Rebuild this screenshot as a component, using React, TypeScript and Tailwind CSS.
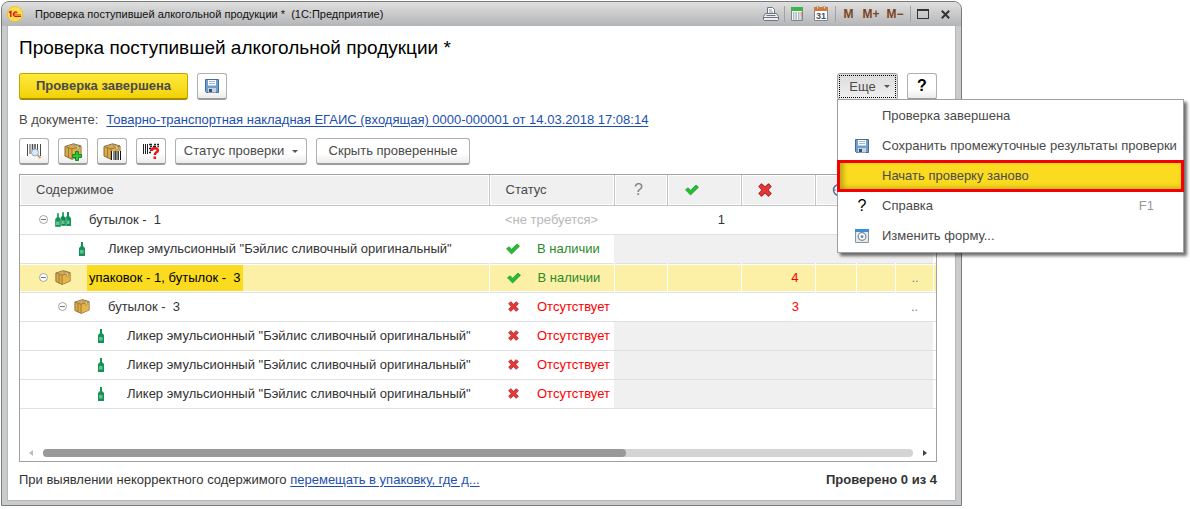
import type { ReactNode } from 'react'

function Logo() {
  return (
    <svg width="16" height="16" viewBox="0 0 16 16">
      <circle cx="8" cy="8" r="7.6" fill="#fde04a" stroke="#f0b92c" strokeWidth=".8" />
      <path d="M2 6.500 3.800 5.500V11" fill="none" stroke="#d8171c" strokeWidth="1.500" />
      <path d="M10.300 6.600A2.300 2.300 0 1 0 8 10.400h6" fill="none" stroke="#d8171c" strokeWidth="1.300" />
      <path d="M9.200 7.800a1 1 0 1 0-1 1H14" fill="none" stroke="#d8171c" strokeWidth=".7" />
    </svg>
  )
}

function Printer() {
  return (
    <svg width="16" height="16" viewBox="0 0 16 16">
      <path d="M4.500 8V1.500h5l2 2V8" fill="#fff" stroke="#6b7480" />
      <path d="M6 4h3M6 6h4" stroke="#8a929c" />
      <path d="M2.500 7.500h11l2 3v3a1 1 0 0 1-1 1h-13a1 1 0 0 1-1-1v-3z" fill="#eceff1" stroke="#6b7480" />
      <path d="M3.500 9.500h9M1 11.500h14" stroke="#6b7480" />
    </svg>
  )
}

function Calculator() {
  return (
    <svg width="14" height="16" viewBox="0 0 14 16">
      <path d="M1.500 1.500h11v13h-11z" fill="#f4f6f6" stroke="#7a8790" />
      <path d="M1 1h12v4H1z" fill="#3db54a" />
      <path d="M3 7h1.500M5.500 7H7M8 7h1.500M3 9h1.500M5.500 9H7M8 9h1.500M3 11h1.500M5.500 11H7M8 11h1.500M3 13h1.500M5.500 13H7M8 13h1.500M10.500 11H12M10.500 13H12" stroke="#75848c" />
      <path d="M10.500 7H12M10.500 9H12" stroke="#d23b32" />
    </svg>
  )
}

function Calendar() {
  return (
    <svg width="14" height="16" viewBox="0 0 14 16">
      <path d="M.5 2.500h13v12H.5z" fill="#fff" stroke="#7a8790" />
      <path d="M0 1h14v4H0z" fill="#d07a3e" />
      <path d="M3 0h1.500v3H3zM9.500 0H11v3H9.500z" fill="#fff" stroke="#8d5a36" strokeWidth=".5" />
      <text x="7" y="13" textAnchor="middle" fontSize="9" fontFamily="Liberation Sans, sans-serif" fill="#46525c">31</text>
    </svg>
  )
}

function Floppy() {
  return (
    <svg width="14" height="14" viewBox="0 0 14 14">
      <path d="M.5.5h13v13h-12l-1-1z" fill="#6d9fd3" stroke="#456c99" />
      <path d="M3 1h8v5.500H3z" fill="#fff" />
      <path d="M4 2.500h6M4 4.500h6" stroke="#a5b6c8" />
      <path d="M3 9h8v4.500H3z" fill="#c9d3dc" />
      <path d="M4 10h3v3H4z" fill="#34536f" />
    </svg>
  )
}

function Box() {
  return (
    <svg width="18" height="17" viewBox="0 0 18 17">
      <path d="M1 3.500 9.500.8 17 3v9.500L8 16.300 1 13z" fill="#dcaa42" stroke="#83683a" />
      <path d="M1.500 3.700 9.500 1.300 16.500 3.300 8 6z" fill="#cfa95c" />
      <path d="M8 6v10l8.500-3.700v-9z" fill="#e5b548" />
      <path d="M1 3.500 8 6l9-2.900M8 6v10M4.500 5v9.500" fill="none" stroke="#94723a" strokeWidth=".9" />
      <path d="m9.500 1.500 3.500 3v2.700l2-.8V3.700L11.500 2z" fill="#f0dfb4" stroke="#8d7444" strokeWidth=".6" />
    </svg>
  )
}

function BoxAdd() {
  return (
    <span className="relative">
      <Box />
      <svg className="absolute left-2 top-2" width="10" height="10" viewBox="0 0 10 10">
        <path d="M3.500.5h3v3h3v3h-3v3h-3v-3h-3v-3h3z" fill="#2dc43a" stroke="#168a22" />
      </svg>
    </span>
  )
}

function BoxBarcode() {
  return (
    <span className="relative">
      <Box />
      <svg className="absolute left-2 top-2" width="10" height="9" viewBox="0 0 10 9">
        <path d="M0 0h10v9H0z" fill="#fff" />
        <path d="M.5 0v9M3 0v9M6 0v9M9.500 0v9" stroke="#111" />
        <path d="M4.500 0v9M7.500 0v9" stroke="#111" strokeWidth=".8" />
      </svg>
    </span>
  )
}

function BarcodeSearch() {
  return (
    <svg width="16" height="16" viewBox="0 0 16 16">
      <path d="M1.500 1v12M4 1v10M11.500 1v10M14.500 1v12" stroke="#4a4a4a" />
      <path d="M6.500 1v10M9 1v10" stroke="#4a4a4a" strokeWidth="1.500" />
      <circle cx="9" cy="9.500" r="3.500" fill="#d8e8f7" stroke="#8fabcb" />
      <path d="m11.500 12 3 3" stroke="#d59c5c" strokeWidth="1.800" />
    </svg>
  )
}

function BarcodeUnknown() {
  return (
    <svg width="18" height="17" viewBox="0 0 18 17">
      <path d="M1.500 1v10M3.500 1v10M5.500 1v10" stroke="#222" />
      <path d="M7 1.500h3M12 1.500h2M15 1.500h2M8 3.500h2M11 3.500h3M7 5.500h2M10 5.500h1M8 7.500h1M7 9.500h2M15.500 3.500h1.500" stroke="#222" strokeWidth="1.300" />
      <path d="M9.500 8c.2-4 7-3.500 6.300-.3C15.400 9.500 12.800 9.300 12.800 12" fill="none" stroke="#f01414" strokeWidth="2.500" />
      <path d="M11.500 13.500H14V16h-2.500z" fill="#f01414" />
    </svg>
  )
}

const bottlePath = 'M2 0h2v4l2 2v8H0V6l2-2z'

function Bottle() {
  return (
    <svg width="16" height="14" viewBox="0 0 16 14">
      <g transform="translate(5)">
        <path d={bottlePath} fill="#149356" />
        <path d="M1 8h3.500v3.500H1z" fill="#66c08f" />
      </g>
    </svg>
  )
}

function Bottles() {
  return (
    <svg width="16" height="15" viewBox="0 0 16 15">
      <g transform="translate(10)"><path d={bottlePath} fill="#149356" /></g>
      <g transform="translate(5)"><path d={bottlePath} fill="#0e8a4e" stroke="#fff" strokeWidth=".4" /></g>
      <g transform="translate(0 1)"><path d={bottlePath} fill="#149356" stroke="#fff" strokeWidth=".4" /></g>
      <path d="M1 9.500h3.500V13H1zM6.500 8.500h3V12h-3zM12 8.500h2.500V12H12z" fill="#66c08f" />
    </svg>
  )
}

function Check() {
  return (
    <svg width="16" height="14" viewBox="0 0 16 14">
      <path d="M1.500 6.800 4 4.800l2.600 2.400L12 2l2.500 2.200L6.600 12z" fill="#25bd2f" stroke="#2a9a35" strokeWidth=".8" strokeLinejoin="round" />
    </svg>
  )
}

function Cross({ size }: { size: number }) {
  return (
    <svg width={size} height={size} viewBox="0 0 12 12">
      <path d="M3 .7 6 3.600 9 .7 11.300 3 8.500 6l2.800 3L9 11.300 6 8.400 3 11.300.7 9l2.800-3L.7 3z" fill="#ec3535" stroke="#a82a2a" strokeWidth=".9" strokeLinejoin="round" />
    </svg>
  )
}

function Pending() {
  return (
    <svg width="14" height="14" viewBox="0 0 14 14">
      <circle cx="7" cy="7" r="5.500" fill="#fff" stroke="#56718f" strokeWidth="1.500" />
      <path d="M2 7h2M7 4v3h3" fill="none" stroke="#56718f" />
    </svg>
  )
}

function FormGear() {
  return (
    <svg width="14" height="14" viewBox="0 0 14 14">
      <path d="M.5.5h13v13H.5z" fill="#e4e9ed" stroke="#8796a3" />
      <path d="M0 0h14v3H0z" fill="#3f8fd8" />
      <circle cx="7" cy="7.500" r="3.800" fill="#fff" stroke="#7d8b97" strokeWidth="1.200" />
      <circle cx="7" cy="7.500" r="1.500" fill="#7d8b97" />
    </svg>
  )
}

function Caret() {
  return (
    <svg width="6" height="3" viewBox="0 0 6 3">
      <path d="M0 0h6L3 3z" fill="#555" />
    </svg>
  )
}

function Toggle() {
  return (
    <button className="block" aria-label="Свернуть">
      <svg width="9" height="9" viewBox="0 0 9 9">
        <circle cx="4.500" cy="4.500" r="4" fill="#fff" stroke="#9a9a9a" strokeWidth=".9" />
        <path d="M2 4.500h5" stroke="#777" />
      </svg>
    </button>
  )
}

function Button({ className = '', label, children }: { className?: string; label?: string; children: ReactNode }) {
  return (
    <button
      aria-label={label}
      className={`flex h-[27px] items-center justify-center rounded-[3px] border border-b-2 border-[#b0b0b0] border-b-[#9c9c9c] bg-linear-to-b from-white from-60% to-[#ececec] ${className}`}
    >
      {children}
    </button>
  )
}

type Row = {
  level: number
  icon: 'bottles' | 'bottle' | 'box'
  name: string
  status: 'none' | 'ok' | 'missing'
  ok?: string
  bad?: string
  more?: boolean
  selected?: boolean
}

const drink = 'Ликер эмульсионный "Бэйлис сливочный оригинальный"'

const rows: Row[] = [
  { level: 0, icon: 'bottles', name: 'бутылок -  1', status: 'none', ok: '1' },
  { level: 1, icon: 'bottle', name: drink, status: 'ok' },
  { level: 0, icon: 'box', name: 'упаковок - 1, бутылок -  3', status: 'ok', bad: '4', more: true, selected: true },
  { level: 1, icon: 'box', name: 'бутылок -  3', status: 'missing', bad: '3', more: true },
  { level: 2, icon: 'bottle', name: drink, status: 'missing' },
  { level: 2, icon: 'bottle', name: drink, status: 'missing' },
  { level: 2, icon: 'bottle', name: drink, status: 'missing' },
]

const indents = ['pl-[19px]', 'pl-[38px]', 'pl-[57px]']

function Status({ status }: { status: Row['status'] }) {
  if (status === 'none') return <span className="text-[#b8b8b8]">&lt;не требуется&gt;</span>
  return (
    <div className="flex items-center gap-4">
      <span className="flex w-4 shrink-0 justify-center">{status === 'ok' ? <Check /> : <Cross size={11} />}</span>
      <span className={status === 'ok' ? 'text-[#2a8a2a]' : 'text-[#f00]'}>{status === 'ok' ? 'В наличии' : 'Отсутствует'}</span>
    </div>
  )
}

function TableRow({ row }: { row: Row }) {
  const leaf = row.icon === 'bottle'
  const bg = row.selected ? 'bg-[#fcf0a6] shadow-[inset_0_1px_white,inset_0_-1px_white]' : leaf ? 'bg-[#f0f0f0]' : ''
  const edge = row.selected ? 'border-l border-white' : ''
  const cell = `${bg} ${edge} p-0`
  return (
    <tr className="h-[29px] border-b border-[#e0e0e0]">
      <td className={`p-0 ${row.selected ? bg : ''}`}>
        <div className={`flex h-7 items-center ${indents[row.level]}`}>
          <span className="w-4 shrink-0">{!leaf && <Toggle />}</span>
          <span className="flex w-4 shrink-0 items-center justify-center">
            {row.icon === 'box' ? <Box /> : row.icon === 'bottles' ? <Bottles /> : <Bottle />}
          </span>
          <span className={`ml-4 px-0.5 whitespace-pre ${row.selected ? 'bg-[#fadb1f] leading-[26px] text-black' : ''}`}>{row.name}</span>
        </div>
      </td>
      <td className={`pl-4 whitespace-nowrap ${row.selected ? `${bg} ${edge}` : ''}`}>
        <Status status={row.status} />
      </td>
      <td className={cell}></td>
      <td className={`${bg} ${edge} pr-4 text-right`}>{row.ok}</td>
      <td className={`${bg} ${edge} pr-4 text-right text-[#f00]`}>{row.bad}</td>
      <td className={cell}></td>
      <td className={cell}></td>
      <td className={`${bg} ${edge} pl-4 text-[#5b86a8]`}>{row.more && '..'}</td>
      <td className={row.selected ? cell : 'p-0'}></td>
    </tr>
  )
}

function MenuItem({ icon, hint, active, children }: { icon?: ReactNode; hint?: string; active?: boolean; children: ReactNode }) {
  return (
    <li role="none">
      <button
        role="menuitem"
        className={`flex h-[30px] w-full items-center pl-[17px] text-left whitespace-nowrap ${
          active ? 'relative bg-[#fadb1f] shadow-[inset_6px_0_4px_#a08a1090,inset_0_-4px_4px_#a08a1070] outline-3 outline-[#f40000] -outline-offset-2' : ''
        }`}
      >
        <span className="flex w-[14px] justify-center text-[16px] text-black">{icon}</span>
        <span className="ml-[13px] grow">{children}</span>
        {hint && <span className="pr-[29px] text-[#999]">{hint}</span>}
      </button>
    </li>
  )
}

function MoreMenu() {
  return (
    <div className="relative">
      <button
        aria-expanded="true"
        className="h-[27px] w-[61px] rounded-[3px] border border-[#a0a0a0] bg-linear-to-b from-[#dcdcdc] to-[#f0f0f0] p-px"
      >
        <span className="flex h-full items-center justify-center gap-2 border border-dotted border-black pl-1">
          Еще <Caret />
        </span>
      </button>
      <ul
        role="menu"
        className="absolute top-[26px] left-0 z-10 w-[347px] border border-[#a0a0a0] bg-white py-px shadow-[3px_3px_3px_#00000090]"
      >
        <MenuItem>Проверка завершена</MenuItem>
        <MenuItem icon={<Floppy />}>Сохранить промежуточные результаты проверки</MenuItem>
        <MenuItem active>Начать проверку заново</MenuItem>
        <MenuItem icon="?" hint="F1">Справка</MenuItem>
        <MenuItem icon={<FormGear />}>Изменить форму...</MenuItem>
      </ul>
    </div>
  )
}

function TitleBar() {
  return (
    <header className="flex h-[24px] items-center bg-linear-to-b from-[#dfdfdf] to-[#b4b5b7] pr-[11px] pl-[5px] text-[11px] text-[#111]">
      <Logo />
      <span className="ml-3 grow whitespace-pre">Проверка поступившей алкогольной продукции *  (1С:Предприятие)</span>
      <div className="flex items-center text-[12px] font-bold text-[#7b4522]">
        <button aria-label="Печать"><Printer /></button>
        <span className="mx-[5px] h-4 w-px bg-[#a2a2a2]" />
        <button aria-label="Калькулятор"><Calculator /></button>
        <button aria-label="Календарь" className="ml-2.5"><Calendar /></button>
        <span className="mx-[7px] h-4 w-px bg-[#a2a2a2]" />
        <button className="w-[11px]">M</button>
        <button className="ml-2 w-[18px]">M+</button>
        <button className="ml-1.5 w-[18px]">M−</button>
        <span className="mx-1.5 h-4 w-px bg-[#a2a2a2]" />
        <button aria-label="Развернуть" className="h-[10px] w-[12px] border border-t-2 border-[#333]" />
        <button aria-label="Закрыть" className="ml-3">
          <svg width="9" height="9" viewBox="0 0 9 9"><path d="m.8.8 7.400 7.400M8.200.8.8 8.200" stroke="#333" strokeWidth="2" /></svg>
        </button>
      </div>
    </header>
  )
}

export default function App() {
  const th = 'border-r border-[#c4c4c4] pl-4 text-left font-normal shadow-[inset_0_0_0_1px_white]'

  return (
    <div className="bg-white pt-px pr-[228px] pl-px font-['Liberation_Sans',Arial,sans-serif] text-[13px] leading-4 text-[#333]">
      <div className="rounded-t-lg border border-[#77797b] bg-[#c9cbcd] pb-1">
        <div className="overflow-hidden rounded-t-[7px]">
          <TitleBar />
        </div>
        <main className="mx-[5px] border border-t-0 border-[#b5b7b9] bg-white pt-2.5 pr-[18px] pb-3 pl-[11px]">
          <h1 className="text-[19px] leading-6 text-black">Проверка поступившей алкогольной продукции *</h1>

          <div className="mt-[13px] flex gap-[9px] text-[#4a4a4a]">
            <button className="h-[27px] w-[169px] rounded-[3px] border border-b-2 border-[#c4a400] border-b-[#a68b00] bg-linear-to-b from-[#ffe938] to-[#f2d200] font-bold">
              Проверка завершена
            </button>
            <Button className="w-[30px]" label="Записать"><Floppy /></Button>
            <div className="grow" />
            <MoreMenu />
            <Button className="w-[30px] text-[16px] font-bold text-black">?</Button>
          </div>

          <p className="mt-3 flex gap-2 text-[#4a4a4a]">
            <span>В документе:</span>
            <a href="#" className="text-[#1c50b0] underline underline-offset-2">
              Товарно-транспортная накладная ЕГАИС (входящая) 0000-000001 от 14.03.2018 17:08:14
            </a>
          </p>

          <div className="mt-2.5 flex gap-[9px] text-[#4a4a4a]">
            <Button className="w-[30px]" label="Поиск по штрихкоду"><BarcodeSearch /></Button>
            <Button className="w-[30px]" label="Добавить упаковку"><BoxAdd /></Button>
            <Button className="w-[30px]" label="Штрихкод упаковки"><BoxBarcode /></Button>
            <Button className="w-[30px]" label="Нет штрихкода"><BarcodeUnknown /></Button>
            <Button className="w-[132px] gap-2 whitespace-nowrap">Статус проверки <Caret /></Button>
            <Button className="w-[154px] whitespace-nowrap">Скрыть проверенные</Button>
          </div>

          <div className="mt-[9px] border border-[#a0a0a0]">
            <table className="w-full table-fixed border-collapse">
              <colgroup>
                <col />
                <col className="w-[125px]" />
                <col className="w-[53px]" />
                <col className="w-[74px]" />
                <col className="w-[74px]" />
                <col className="w-[41px]" />
                <col className="w-[39px]" />
                <col className="w-[38px]" />
                <col className="w-[3px]" />
              </colgroup>
              <thead>
                <tr className="h-[30px] border-b border-[#c4c4c4] bg-[#f0f0f0] text-[#4a4a4a]">
                  <th className={th}>Содержимое</th>
                  <th className={th}>Статус</th>
                  <th className={th}><span className="block w-4 text-center text-[16px] text-[#808080]">?</span></th>
                  <th className={th}><Check /></th>
                  <th className={th}><Cross size={14} /></th>
                  <th className={th}><Pending /></th>
                  <th className={th}></th>
                  <th className={th}></th>
                  <th className="p-0"></th>
                </tr>
              </thead>
              <tbody>
                {rows.map((row, i) => (
                  <TableRow key={i} row={row} />
                ))}
              </tbody>
            </table>
            <div className="mt-9 flex h-[16px] items-center px-[9px]">
              <svg width="4" height="6" viewBox="0 0 4 6"><path d="M4 0v6L0 3z" fill="#bbb" /></svg>
              <div className="mx-2.5 h-2 grow rounded-full bg-[#d4d4d4]">
                <div className="h-2 w-[67%] rounded-full bg-[#999]" />
              </div>
              <svg width="4" height="6" viewBox="0 0 4 6"><path d="M0 0v6l4-3z" fill="#444" /></svg>
            </div>
          </div>

          <footer className="mt-2.5 flex justify-between">
            <span>
              При выявлении некорректного содержимого{' '}
              <a href="#" className="text-[#1c50b0] underline underline-offset-2">перемещать в упаковку, где д...</a>
            </span>
            <b>Проверено 0 из 4</b>
          </footer>
        </main>
      </div>
    </div>
  )
}
